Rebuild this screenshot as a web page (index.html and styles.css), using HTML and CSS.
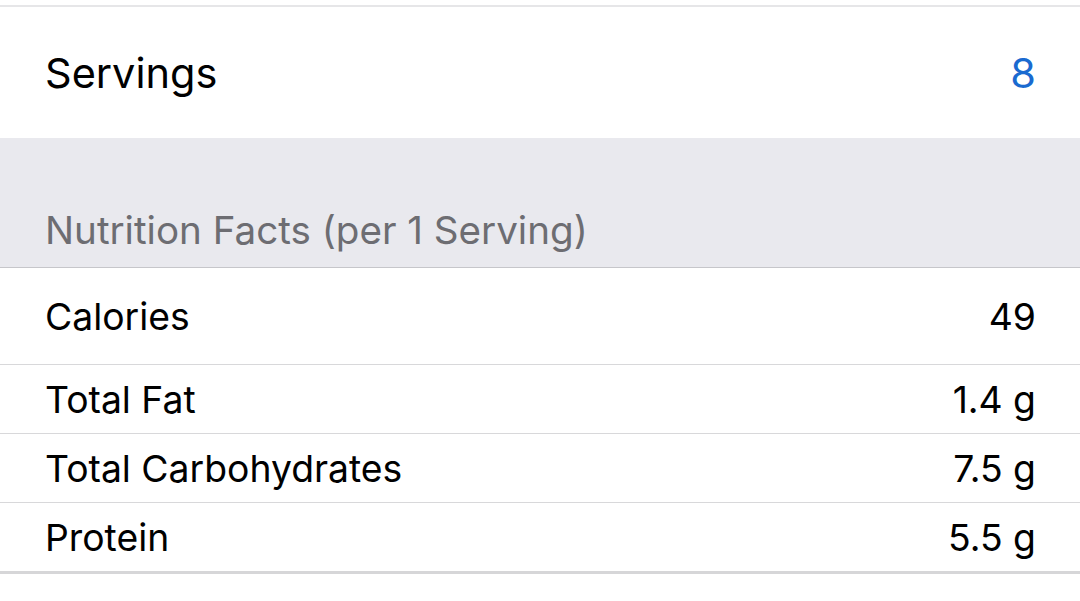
FILE: index.html
```html
<!DOCTYPE html>
<html>
<head>
<meta charset="utf-8">
<link rel="stylesheet" href="styles.css">
</head>
<body>
<div class="screen">
  <div class="top-gap"></div>
  <div class="row servings">
    <span class="label">Servings</span>
    <span class="value blue">8</span>
  </div>
  <div class="section-header">
    <span>Nutrition Facts (per 1 Serving)</span>
  </div>
  <div class="list">
    <div class="row item calories">
      <span class="label">Calories</span>
      <span class="value">49</span>
    </div>
    <div class="row item">
      <span class="label">Total Fat</span>
      <span class="value">1.4 g</span>
    </div>
    <div class="row item">
      <span class="label">Total Carbohydrates</span>
      <span class="value">7.5 g</span>
    </div>
    <div class="row item last">
      <span class="label">Protein</span>
      <span class="value">5.5 g</span>
    </div>
  </div>
</div>
</body>
</html>
```
FILE: styles.css
```css
html, body {
  margin: 0;
  padding: 0;
  background: #ffffff;
}
body {
  font-family: Inter, "Liberation Sans", sans-serif;
  color: #000;
  width: 1080px;
  height: 601px;
  overflow: hidden;
}
.top-gap {
  height: 5px;
  border-bottom: 2px solid #e6e6e8;
}
.row {
  display: flex;
  align-items: center;
  justify-content: space-between;
  padding: 0 44px 0 45px;
}
.servings {
  height: 131px;
  font-size: 41.5px;
}
.blue {
  color: #1a6ad0;
}
.section-header {
  height: 129px;
  background: #e9e9ee;
  border-bottom: 1px solid #c6c6ca;
  box-sizing: content-box;
  display: flex;
  align-items: flex-end;
  padding: 0 45px;
}
.section-header span {
  font-size: 38.6px;
  color: #6d6d72;
  line-height: 1;
  padding-bottom: 17px;
}
.list {
  display: flex;
  flex-direction: column;
}
.item {
  height: 68px;
  font-size: 37.3px;
  border-bottom: 1px solid #d8d8da;
}
.item.calories {
  height: 96px;
}
.item.last {
  border-bottom: 3px solid #d6d6d8;
}
.value {
  text-align: right;
}
```
